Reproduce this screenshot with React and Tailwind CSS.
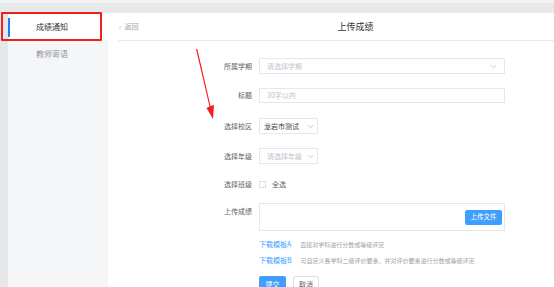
import React from "react";

const font = { fontFamily: '"Noto Sans CJK SC", "Noto Sans", sans-serif' };

function Chevron({ className = "" }) {
  return (
    <svg width="7" height="5" viewBox="0 0 7 5" className={className}>
      <polyline points="0.8,1 3.5,3.8 6.2,1" fill="none" stroke="#c0c4cc" strokeWidth="0.9" />
    </svg>
  );
}

function Row({ label, className = "", labelClass = "items-center", children }) {
  return (
    <div className={`flex shrink-0 ${className}`}>
      <div className={`w-[259px] shrink-0 flex ${labelClass} justify-end pr-[7px] text-[7px] text-[#606266]`}>{label}</div>
      {children}
    </div>
  );
}

export default function App() {
  return (
    <div className="relative w-[554px] h-[287px] overflow-hidden bg-white flex flex-col" style={font}>
      <div className="h-[3px] shrink-0 bg-[#f1f2f3]" />
      <div className="h-[10px] shrink-0 bg-[#e8e9eb]" />
      <div className="flex flex-1 min-h-0">
        <div className="w-[8px] shrink-0 bg-[#e6e7e9]" />
        <div className="w-[100px] shrink-0 bg-[#f5f6f8] flex flex-col">
          <div className="h-[27px] shrink-0 bg-white flex items-center relative">
            <div className="absolute left-0 top-[5px] h-[19px] w-[2px] bg-[#1f7cff]" />
            <div className="w-[88px] text-center text-[8px] text-[#333]">成绩通知</div>
          </div>
          <div className="h-[27px] shrink-0 flex items-center">
            <div className="w-[88px] text-center text-[8px] text-[#909399]">教师寄语</div>
          </div>
        </div>
        <div className="flex-1 flex flex-col">
          <div className="ml-[10px] h-[28px] shrink-0 border-b border-[#e9eaec] flex items-center">
            <span className="ml-[1px] text-[8px] text-[#b0b3b8]">‹</span>
            <span className="ml-[3px] text-[7px] text-[#a0a3a8]">返回</span>
            <span className="ml-[199px] text-[9px] text-[#333]">上传成绩</span>
          </div>

          <div className="relative -ml-[108px] flex flex-col">
            <Row label="所属学期" className="mt-[17px] h-[16px]">
              <div className="w-[246px] h-[16px] border border-[#e4e7ed] flex items-center justify-between px-[7px]">
                <span className="text-[7px] text-[#c0c4cc]">请选择学期</span>
                <Chevron />
              </div>
            </Row>
            <Row label="标题" className="mt-[14px] h-[15px]">
              <div className="w-[246px] h-[15px] border border-[#e4e7ed] flex items-center px-[7px]">
                <span className="text-[7px] text-[#c0c4cc]">30字以内</span>
              </div>
            </Row>
            <Row label="选择校区" className="mt-[15px] h-[16px]">
              <div className="w-[59px] h-[16px] border border-[#e4e7ed] flex items-center justify-between pl-[4px] pr-[3px]">
                <span className="text-[7px] text-[#444]">龙岩市测试</span>
                <Chevron />
              </div>
            </Row>
            <Row label="选择年级" className="mt-[14px] h-[16px]">
              <div className="w-[59px] h-[16px] border border-[#e4e7ed] flex items-center justify-between pl-[7px] pr-[3px]">
                <span className="text-[7px] text-[#c0c4cc]">请选择年级</span>
                <Chevron />
              </div>
            </Row>
            <Row label="选择班级" className="mt-[13px] h-[14px]">
              <div className="flex items-center">
                <div className="w-[7px] h-[7px] border border-[#dcdfe6] bg-white" />
                <span className="ml-[6px] text-[7px] text-[#606266]">全选</span>
              </div>
            </Row>
            <Row label="上传成绩" className="mt-[12px] h-[28px]" labelClass="items-start pt-[3px]">
              <div className="w-[246px] h-[28px] border border-[#e4e7ed] flex items-center justify-end pr-[2px]">
                <div className="w-[37px] h-[15px] rounded-[2px] bg-[#409eff] text-white text-[6.5px] flex items-center justify-center">上传文件</div>
              </div>
            </Row>
            <Row label="" className="mt-[7px] h-[12px]">
              <div className="flex items-center">
                <span className="text-[7px] text-[#409eff]">下载模板A</span>
                <span className="ml-[9px] text-[6px] text-[#a0a3a8]">直接对学科进行分数或等级评定</span>
              </div>
            </Row>
            <Row label="" className="mt-[4px] h-[12px]">
              <div className="flex items-center">
                <span className="text-[7px] text-[#409eff]">下载模板B</span>
                <span className="ml-[9px] text-[6px] text-[#a0a3a8]">可自定义各学科二级评价要素，并对评价要素进行分数或等级评定</span>
              </div>
            </Row>
            <Row label="" className="mt-[10px] h-[16px]">
              <div className="flex items-center gap-[7px]">
                <div className="w-[27px] h-[16px] rounded-[2px] bg-[#409eff] text-white text-[7px] flex items-center justify-center">提交</div>
                <div className="w-[26px] h-[16px] rounded-[2px] border border-[#dcdfe6] bg-white text-[#606266] text-[7px] flex items-center justify-center">取消</div>
              </div>
            </Row>
          </div>
        </div>
      </div>

      <div className="absolute left-[1px] top-[12px] w-[101px] h-[29px] border-2 border-[#f0201f] rounded-[1px] pointer-events-none" />

      <svg className="absolute left-0 top-0 pointer-events-none" width="554" height="287" viewBox="0 0 554 287">
        <polygon points="196,49 197.3,49 210.5,106 214,105 213,119 206.5,108 209.5,106.5" fill="#f01e1e" />
      </svg>
    </div>
  );
}
